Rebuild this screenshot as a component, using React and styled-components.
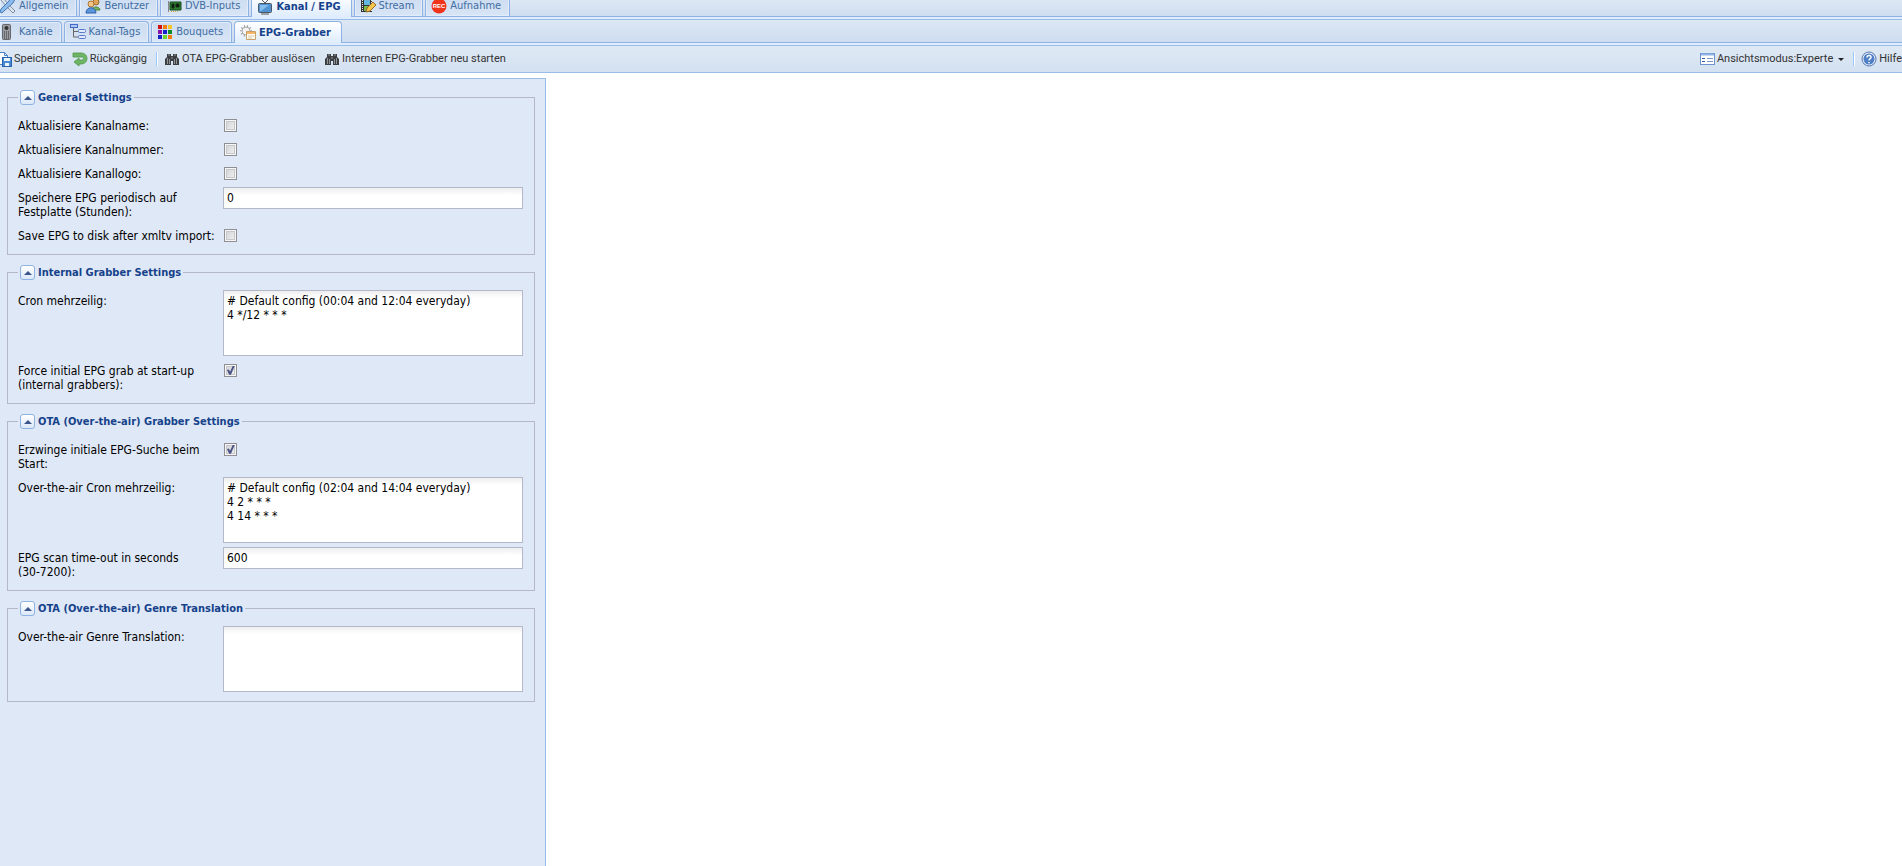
import React, { useId, useState } from 'react';
import styled, { createGlobalStyle, css } from 'styled-components';

const uiFont = '"DejaVu Sans Condensed", "DejaVu Sans", sans-serif';
const toolbarFont = 'Roboto, "Liberation Sans", Arial, sans-serif';

const GlobalStyle = createGlobalStyle`
  * {
    box-sizing: border-box;
  }
  body {
    margin: 0;
    background: #fff;
    color: #000;
    font-family: ${uiFont};
    font-size: 12px;
  }
`;

const Page = styled.div`
  display: flex;
  flex-direction: column;
  min-height: 100vh;
  overflow: hidden;
`;

// Tab bars
const TabBar = styled.nav`
  display: flex;
  align-items: flex-end;
  gap: 2px;
  height: ${props => (props.$level === 1 ? '20px' : '26px')};
  padding-bottom: 3px;
  overflow: hidden;
  border-bottom: 1px solid #99bce8;
  background:
    linear-gradient(#8db2e3, #8db2e3) 0 calc(100% - 2px) / 100% 1px no-repeat,
    linear-gradient(#deecfd, #deecfd) 0 100% / 100% 3px no-repeat,
    linear-gradient(#dde8f5, #cbdbef);
`;

const TabButton = styled.button`
  display: flex;
  flex: none;
  align-items: center;
  gap: 3px;
  height: 21px;
  padding: 0 8px 0 5px;
  border: 1px solid #8db2e3;
  border-bottom: 0;
  border-radius: 4px 4px 0 0;
  background: linear-gradient(#ccdcf0, #d8e5f6);
  box-shadow: inset 0 0 0 1px #e3edfa;
  color: #416da3;
  font-family: ${uiFont};
  font-size: 11px;
  line-height: 14px;
  white-space: nowrap;
  cursor: pointer;

  &:first-child {
    padding-left: 0;
    border-left: 0;
    border-top-left-radius: 0;
  }

  ${props => props.$active && css`
    height: 22px;
    margin-bottom: -1px;
    padding-right: 10px;
    background: linear-gradient(#fff, #deecfd);
    box-shadow: none;
    color: #15428b;
    font-weight: bold;
  `}
`;

// Toolbar
const Toolbar = styled.div`
  display: flex;
  align-items: center;
  gap: 9px;
  height: 27px;
  margin-left: -4px;
  border-bottom: 1px solid #99bce8;
  background: linear-gradient(#dfe9f5, #d3e1f1);
`;

const ToolButton = styled.button`
  display: flex;
  flex: none;
  align-items: center;
  gap: 2px;
  padding: 0;
  border: 0;
  background: none;
  color: #333;
  font-family: ${toolbarFont};
  font-size: 11px;
  line-height: 16px;
  white-space: nowrap;
  cursor: pointer;
`;

const Separator = styled.span`
  width: 2px;
  height: 14px;
  margin-right: -3px;
  border-left: 1px solid #98c8ff;
  border-right: 1px solid #fff;
`;

const Spacer = styled.div`
  flex: 1;
`;

const Caret = styled.span`
  margin-left: 3px;
  border: 3px solid transparent;
  border-top-color: #222;
  border-bottom: 0;
`;

const Icon = styled.svg`
  flex: none;
  width: 16px;
  height: 16px;
`;

// Settings form
const Content = styled.main`
  display: flex;
  flex: 1;
  padding-top: 5px;
`;

const SettingsForm = styled.form`
  flex: none;
  padding: 11px 10px 10px 7px;
  border-top: 1px solid #99bce8;
  border-right: 1px solid #99bce8;
  background: #dfe8f6;
`;

const Group = styled.fieldset`
  min-width: 0;
  margin: 0 0 10px;
  padding: 10px 11px 5px 10px;
  border: 1px solid #b5b8c8;
`;

const GroupLegend = styled.legend`
  display: flex;
  align-items: center;
  gap: 3px;
  height: 15px;
  padding: 0 2px;
  color: #15428b;
  font-size: 11px;
  font-weight: bold;
  line-height: 15px;
`;

const ToggleButton = styled.button`
  display: flex;
  align-items: center;
  justify-content: center;
  width: 15px;
  height: 15px;
  padding: 0;
  border: 1px solid #8fb3e0;
  border-radius: 3px;
  background: linear-gradient(#fff, #dbe8f8);
  cursor: pointer;
`;

const ToggleArrow = styled.span`
  border: 4px solid transparent;
  border-top: 0;
  border-bottom-color: #3c568c;
  transform: ${props => (props.$open ? 'none' : 'rotate(180deg)')};
`;

const Row = styled.div`
  display: flex;
  align-items: flex-start;
  margin-bottom: 4px;
`;

const FieldLabel = styled.label`
  width: 205px;
  padding: 4px 5px 2px 0;
  line-height: 14px;
  white-space: pre-line;
`;

const FieldBody = styled.div`
  display: flex;
  width: 300px;
`;

const fieldBox = css`
  display: block;
  width: 100%;
  margin: 0;
  border: 1px solid #b5b8c8;
  border-radius: 0;
  background: linear-gradient(#eee, #fff 7px);
  color: #000;
  font-family: ${uiFont};
  font-size: 12px;
  line-height: 14px;
  outline: 0;
`;

const TextInput = styled.input`
  ${fieldBox}
  height: 22px;
  padding: 2px 3px;
`;

const TextBox = styled.textarea`
  ${fieldBox}
  height: 66px;
  padding: 3px;
  resize: none;
`;

const Checkbox = styled.input`
  appearance: none;
  width: 13px;
  height: 13px;
  margin: 4px 1px 3px;
  border: 1px solid #8f8f94;
  background: linear-gradient(135deg, #cfd0d2, #f4f4f4);
  box-shadow: inset 0 0 0 1px #f6f6f6, inset 0 0 0 2px #c6c8cc;

  &:checked::after {
    content: '';
    display: block;
    width: 11px;
    height: 11px;
    background: #4a5285;
    clip-path: polygon(18% 45%, 36% 42%, 46% 62%, 70% 10%, 88% 10%, 54% 88%, 38% 88%);
  }
`;

const icons = {
  tools: (
    <>
      <path d="M0 1l3-1 8 9 4 4-2 2-4-4z" fill="#dfe7ee" stroke="#7b8ea3" />
      <path d="M15 1l-2 4-9 8-2 2-2-1 1-3 8-8 2-3z" fill="#8cbcec" stroke="#4a79b5" />
    </>
  ),
  users: (
    <>
      <circle cx="11" cy="4" r="3" fill="#e0a458" stroke="#9b6a2c" />
      <path d="M7 12c0-4 8-4 8 0z" fill="#7ab55c" stroke="#4d8438" />
      <circle cx="6" cy="6" r="3" fill="#f3c78b" stroke="#b0732b" />
      <path d="M1 15c0-7 10-7 10 0z" fill="#5b96dd" stroke="#2e62ab" />
    </>
  ),
  card: (
    <>
      <path d="M2.500 3v11" stroke="#888" />
      <path d="M4 4h11v8H4z" fill="#2f7d32" stroke="#174d1b" />
      <path d="M6 6h2v4H6zM10 6h3v3h-3z" fill="#111" stroke="#122d13" />
      <path d="M5 13.500h8" stroke="#d8b13c" strokeDasharray="1 1" />
    </>
  ),
  tv: (
    <>
      <path d="M5 1l3 3 3-3" fill="none" stroke="#555" />
      <rect x="1.500" y="4.500" width="13" height="9" rx="1" fill="#4f93d2" stroke="#4c5664" />
      <path d="M3 6h9L4 12H3z" fill="#86bdec" />
      <path d="M4 15h8" stroke="#555" />
    </>
  ),
  stream: (
    <>
      <path d="M1 1h11v13H1z" fill="#333" />
      <path d="M4 2h6v5H4z" fill="#65b6dd" />
      <path d="M4 8h6v5H4z" fill="#79bd4c" />
      <path d="M2.500 2v12M11.500 2v12" stroke="#e8e8e8" strokeDasharray="1 1" />
      <path d="M6 14l1-4 6-6 3 3-6 6z" fill="#f3c64d" stroke="#9b6a22" />
    </>
  ),
  rec: (
    <>
      <circle cx="8" cy="8" r="7.500" fill="#f0341c" />
      <text x="8" y="10" textAnchor="middle" fontSize="6" fontWeight="bold" fontFamily="Liberation Sans, sans-serif" fill="#fff">REC</text>
    </>
  ),
  remote: (
    <>
      <rect x="2.500" y="0.500" width="8" height="15" rx="1" fill="#9a9ca1" stroke="#65676c" />
      <circle cx="6.500" cy="4" r="2" fill="#333" />
      <path d="M4 8h5M4 10h5M4 12h5M4 14h5" stroke="#333" strokeDasharray="1 1" />
    </>
  ),
  tree: (
    <>
      <path d="M3.500 4v9h5M3.500 7.500h5" fill="none" stroke="#666" />
      <rect x="0.500" y="0.500" width="7" height="3" fill="#a9c8f5" stroke="#4668c5" />
      <rect x="8.500" y="5.500" width="7" height="3" rx="1" fill="#dfe9fb" stroke="#5a78cc" />
      <rect x="8.500" y="11.500" width="7" height="3" rx="1" fill="#dfe9fb" stroke="#5a78cc" />
    </>
  ),
  bouquets: (
    <>
      <path d="M1 1h4v4H1z" fill="#d40f0f" />
      <path d="M6 1h4v4H6z" fill="#f07c12" />
      <path d="M11 1h4v4h-4z" fill="#f5c62a" />
      <path d="M1 6h4v4H1z" fill="#8a14a8" />
      <path d="M6 6h4v4H6z" fill="#1522c8" />
      <path d="M11 6h4v4h-4z" fill="#0f8a2a" />
      <path d="M1 11h4v4H1z" fill="#1522c8" />
      <path d="M6 11h4v4H6z" fill="#6fd42b" />
      <path d="M11 11h4v4h-4z" fill="#f07c12" />
    </>
  ),
  grabber: (
    <>
      <circle cx="6" cy="6" r="4" fill="#f2f2f2" stroke="#aaa" />
      <circle cx="6" cy="6" r="5" fill="none" stroke="#999" strokeWidth="2" strokeDasharray="1 2" />
      <path d="M6.500 6.500h9v8h-9z" fill="#fffdf5" stroke="#c9a06a" />
      <path d="M7 7h8v2H7z" fill="#f3b566" />
      <path d="M8 11h6M8 13h4" stroke="#d8c8a8" />
    </>
  ),
  save: (
    <>
      <path d="M1.500 1.500h7l3 3v9h-10z" fill="#fff" stroke="#4a83c9" />
      <path d="M8.500 1.500v3h3" fill="none" stroke="#4a83c9" />
      <rect x="6.500" y="6.500" width="9" height="9" fill="#4b8bd6" stroke="#2a62ab" />
      <path d="M8 7h6v3H8zM9 12h4v3H9z" fill="#eaf3fd" />
    </>
  ),
  undo: (
    <path d="M1 2h8c8 0 8 11 0 11H7v2L2 11l5-4v2h3c2 0 2-3 0-3H1z" fill="#6eb665" stroke="#4d9548" strokeWidth=".8" />
  ),
  binoculars: (
    <>
      <path d="M3 3h4v2h2V3h4v3l2 2v6H9v-4H7v4H1V8l2-2z" fill="#3c3f42" />
      <path d="M4 4h2M10 4h2M3.500 7v6M5.500 8v5M10.500 8v5M12.500 7v6M7 7h2" stroke="#a8abaf" strokeWidth=".8" />
    </>
  ),
  view: (
    <>
      <rect x="1.500" y="2.500" width="14" height="11" fill="#fff" stroke="#6d93cd" />
      <path d="M2 3.500h13" stroke="#8fb2e6" strokeWidth="2" />
      <path d="M3 7.500h3M3 10.500h3" stroke="#345fa5" />
      <path d="M8 7.500h6M8 10.500h6" stroke="#7897c7" />
    </>
  ),
  help: (
    <>
      <circle cx="8" cy="8" r="7" fill="#e8effa" stroke="#5378ad" />
      <circle cx="8" cy="8" r="5.500" fill="#4f7fc4" />
      <path d="M6 6.500c0-3 4.500-2.500 4 0-.3 1.200-2 1.300-2 3M8 11v1.200" fill="none" stroke="#fff" strokeWidth="1.500" />
    </>
  ),
};

const mainTabs = [
  { icon: 'tools', label: 'Allgemein' },
  { icon: 'users', label: 'Benutzer' },
  { icon: 'card', label: 'DVB-Inputs' },
  { icon: 'tv', label: 'Kanal / EPG' },
  { icon: 'stream', label: 'Stream' },
  { icon: 'rec', label: 'Aufnahme' },
];

const channelTabs = [
  { icon: 'remote', label: 'Kanäle' },
  { icon: 'tree', label: 'Kanal-Tags' },
  { icon: 'bouquets', label: 'Bouquets' },
  { icon: 'grabber', label: 'EPG-Grabber' },
];

const groups = [
  {
    title: 'General Settings',
    fields: [
      { type: 'check', label: 'Aktualisiere Kanalname:' },
      { type: 'check', label: 'Aktualisiere Kanalnummer:' },
      { type: 'check', label: 'Aktualisiere Kanallogo:' },
      { type: 'text', label: 'Speichere EPG periodisch auf Festplatte (Stunden):', value: '0' },
      { type: 'check', label: 'Save EPG to disk after xmltv import:' },
    ],
  },
  {
    title: 'Internal Grabber Settings',
    fields: [
      {
        type: 'area',
        label: 'Cron mehrzeilig:',
        value: '# Default config (00:04 and 12:04 everyday)\n4 */12 * * *',
      },
      { type: 'check', label: 'Force initial EPG grab at start-up (internal grabbers):', value: true },
    ],
  },
  {
    title: 'OTA (Over-the-air) Grabber Settings',
    fields: [
      { type: 'check', label: 'Erzwinge initiale EPG-Suche beim Start:', value: true },
      {
        type: 'area',
        label: 'Over-the-air Cron mehrzeilig:',
        value: '# Default config (02:04 and 14:04 everyday)\n4 2 * * *\n4 14 * * *',
      },
      // keep the range in one piece on its own line
      { type: 'text', label: 'EPG scan time-out in seconds\n(30-7200):', value: '600' },
    ],
  },
  {
    title: 'OTA (Over-the-air) Genre Translation',
    fields: [{ type: 'area', label: 'Over-the-air Genre Translation:', value: '' }],
  },
];

function Glyph({ name }) {
  return <Icon viewBox="0 0 16 16" aria-hidden="true">{icons[name]}</Icon>;
}

function Tabs({ items, level, initial }) {
  const [active, setActive] = useState(initial);

  return (
    <TabBar $level={level}>
      {items.map(item => (
        <TabButton
          key={item.label}
          type="button"
          $active={item.label === active}
          onClick={() => setActive(item.label)}
        >
          <Glyph name={item.icon} />
          {item.label}
        </TabButton>
      ))}
    </TabBar>
  );
}

function Field({ field }) {
  const id = useId();

  return (
    <Row>
      <FieldLabel htmlFor={id}>{field.label}</FieldLabel>
      <FieldBody>
        {field.type === 'check' && <Checkbox id={id} type="checkbox" defaultChecked={field.value} />}
        {field.type === 'text' && <TextInput id={id} type="text" defaultValue={field.value} />}
        {field.type === 'area' && <TextBox id={id} defaultValue={field.value} spellCheck={false} />}
      </FieldBody>
    </Row>
  );
}

function SettingsGroup({ group }) {
  const [open, setOpen] = useState(true);

  return (
    <Group>
      <GroupLegend>
        <ToggleButton type="button" aria-label={group.title} onClick={() => setOpen(!open)}>
          <ToggleArrow $open={open} />
        </ToggleButton>
        {group.title}
      </GroupLegend>
      {open && group.fields.map(field => <Field key={field.label} field={field} />)}
    </Group>
  );
}

function App() {
  return (
    <Page>
      <GlobalStyle />
      <Tabs items={mainTabs} level={1} initial="Kanal / EPG" />
      <Tabs items={channelTabs} level={2} initial="EPG-Grabber" />
      <Toolbar>
        <ToolButton type="button"><Glyph name="save" />Speichern</ToolButton>
        <ToolButton type="button"><Glyph name="undo" />Rückgängig</ToolButton>
        <Separator />
        <ToolButton type="button"><Glyph name="binoculars" />OTA EPG-Grabber auslösen</ToolButton>
        <ToolButton type="button"><Glyph name="binoculars" />Internen EPG-Grabber neu starten</ToolButton>
        <Spacer />
        <ToolButton type="button"><Glyph name="view" />Ansichtsmodus:Experte<Caret /></ToolButton>
        <Separator />
        <ToolButton type="button"><Glyph name="help" />Hilfe</ToolButton>
      </Toolbar>
      <Content>
        <SettingsForm>
          {groups.map(group => <SettingsGroup key={group.title} group={group} />)}
        </SettingsForm>
      </Content>
    </Page>
  );
}

export default App;
